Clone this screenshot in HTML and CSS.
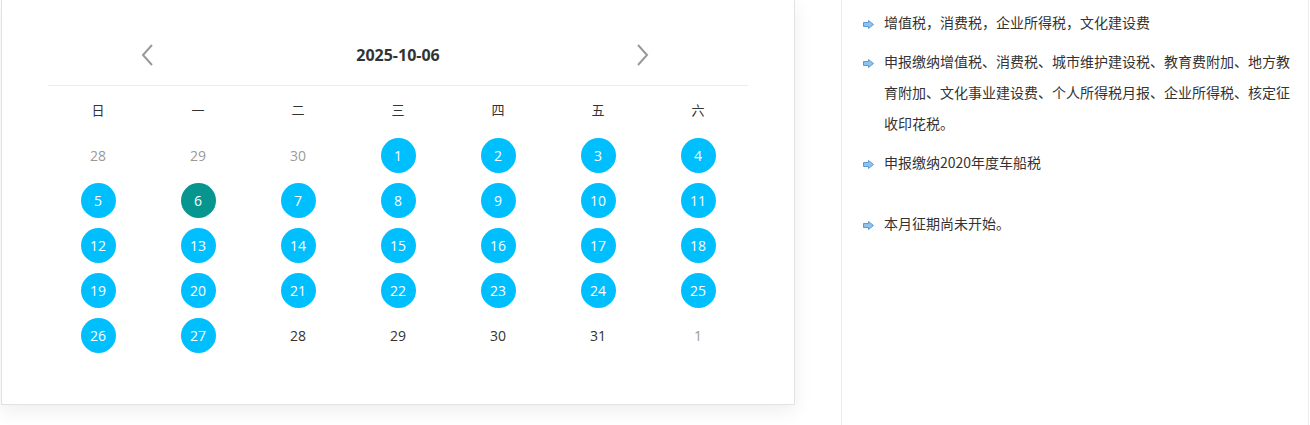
FILE: index.html
```html
<!DOCTYPE html>
<html lang="zh-CN">
<head>
<meta charset="utf-8">
<title>日历</title>
<link rel="stylesheet" href="styles.css">
</head>
<body>
<div class="page">
  <section class="card">
    <div class="cal-head">
      <div class="nav">
        <span class="arrow"><svg width="14" height="24" viewBox="0 0 14 24"><path d="M12 2 L3 12 L12 22" fill="none" stroke="#999" stroke-width="2"/></svg></span>
        <span class="title">2025-10-06</span>
        <span class="arrow"><svg width="14" height="24" viewBox="0 0 14 24"><path d="M2 2 L11 12 L2 22" fill="none" stroke="#999" stroke-width="2"/></svg></span>
      </div>
    </div>
    <div class="grid">
      <div class="wd">日</div><div class="wd">一</div><div class="wd">二</div><div class="wd">三</div><div class="wd">四</div><div class="wd">五</div><div class="wd">六</div>

      <div class="d other"><span>28</span></div>
      <div class="d other"><span>29</span></div>
      <div class="d other"><span>30</span></div>
      <div class="d"><span class="dot">1</span></div>
      <div class="d"><span class="dot">2</span></div>
      <div class="d"><span class="dot">3</span></div>
      <div class="d"><span class="dot">4</span></div>

      <div class="d"><span class="dot">5</span></div>
      <div class="d"><span class="dot sel">6</span></div>
      <div class="d"><span class="dot">7</span></div>
      <div class="d"><span class="dot">8</span></div>
      <div class="d"><span class="dot">9</span></div>
      <div class="d"><span class="dot">10</span></div>
      <div class="d"><span class="dot">11</span></div>

      <div class="d"><span class="dot">12</span></div>
      <div class="d"><span class="dot">13</span></div>
      <div class="d"><span class="dot">14</span></div>
      <div class="d"><span class="dot">15</span></div>
      <div class="d"><span class="dot">16</span></div>
      <div class="d"><span class="dot">17</span></div>
      <div class="d"><span class="dot">18</span></div>

      <div class="d"><span class="dot">19</span></div>
      <div class="d"><span class="dot">20</span></div>
      <div class="d"><span class="dot">21</span></div>
      <div class="d"><span class="dot">22</span></div>
      <div class="d"><span class="dot">23</span></div>
      <div class="d"><span class="dot">24</span></div>
      <div class="d"><span class="dot">25</span></div>

      <div class="d"><span class="dot">26</span></div>
      <div class="d"><span class="dot">27</span></div>
      <div class="d"><span>28</span></div>
      <div class="d"><span>29</span></div>
      <div class="d"><span>30</span></div>
      <div class="d"><span>31</span></div>
      <div class="d other"><span>1</span></div>
    </div>
  </section>

  <aside class="panel">
    <ul class="list">
      <li><svg class="ico" width="11" height="9" viewBox="0 0 11 9"><path d="M0.5 2.5 H5.5 V0.5 L10.5 4.5 L5.5 8.5 V6.5 H0.5 Z" fill="#8fc3ec" stroke="#5b9bd5" stroke-width="1"/></svg><span>增值税，消费税，企业所得税，文化建设费</span></li>
      <li><svg class="ico" width="11" height="9" viewBox="0 0 11 9"><path d="M0.5 2.5 H5.5 V0.5 L10.5 4.5 L5.5 8.5 V6.5 H0.5 Z" fill="#8fc3ec" stroke="#5b9bd5" stroke-width="1"/></svg><span>申报缴纳增值税、消费税、城市维护建设税、教育费附加、地方教育附加、文化事业建设费、个人所得税月报、企业所得税、核定征收印花税。</span></li>
      <li><svg class="ico" width="11" height="9" viewBox="0 0 11 9"><path d="M0.5 2.5 H5.5 V0.5 L10.5 4.5 L5.5 8.5 V6.5 H0.5 Z" fill="#8fc3ec" stroke="#5b9bd5" stroke-width="1"/></svg><span>申报缴纳2020年度车船税</span></li>
    </ul>
    <ul class="list list-second">
      <li><svg class="ico" width="11" height="9" viewBox="0 0 11 9"><path d="M0.5 2.5 H5.5 V0.5 L10.5 4.5 L5.5 8.5 V6.5 H0.5 Z" fill="#8fc3ec" stroke="#5b9bd5" stroke-width="1"/></svg><span>本月征期尚未开始。</span></li>
    </ul>
  </aside>
</div>
</body>
</html>
```

FILE: styles.css
```css
* { box-sizing: border-box; }
html, body { margin: 0; padding: 0; background: #fff; }
body {
  font-family: "Open Sans", "Noto Sans CJK SC", sans-serif;
  color: #333;
  font-size: 14px;
}
.page {
  display: flex;
  align-items: flex-start;
  padding-left: 1px;
  height: 425px;
  overflow: hidden;
}
.card {
  width: 794px;
  flex: none;
  background: #fff;
  border: 1px solid #e2e2e2;
  border-top: none;
  padding: 30px 46px 46px;
  box-shadow: 0 6px 18px rgba(0, 0, 0, 0.07);
}
.cal-head {
  border-bottom: 1px solid #ececec;
  padding-bottom: 5px;
}
.nav {
  height: 50px;
  display: flex;
  align-items: center;
  justify-content: space-between;
  padding: 0 98px 0 92px;
}
.arrow { display: flex; align-items: center; }
.title {
  font-weight: 700;
  font-size: 16px;
  color: #333;
  margin-left: 6px;
}
.grid {
  display: grid;
  grid-template-columns: repeat(7, 100px);
  grid-auto-rows: 45px;
  grid-template-rows: 47px;
}
.wd {
  display: flex;
  align-items: center;
  justify-content: center;
  font-family: "Noto Sans CJK SC", sans-serif;
  font-size: 13px;
  color: #333;
}
.d {
  display: flex;
  align-items: center;
  justify-content: center;
  font-size: 14px;
  color: #333;
}
.d.other { color: #9a9a9a; }
.dot {
  width: 35px;
  height: 35px;
  border-radius: 50%;
  background: #00bfff;
  color: #fff;
  display: flex;
  align-items: center;
  justify-content: center;
}
.dot.sel { background: #06968f; }

.panel {
  margin-left: 46px;
  width: 468px;
  height: 425px;
  border-left: 1px solid #ececec;
  border-right: 1px solid #ececec;
  padding: 7px 12px 0 21px;
  font-family: "Noto Sans CJK SC", sans-serif;
  font-size: 14px;
  color: #333;
}
.list {
  list-style: none;
  margin: 0;
  padding: 0;
}
.list li {
  display: flex;
  align-items: flex-start;
  line-height: 31px;
  margin-bottom: 8px;
}
.list-second { margin-top: 30px; }
.ico {
  flex: none;
  margin-top: 13px;
  margin-right: 10px;
}
```
